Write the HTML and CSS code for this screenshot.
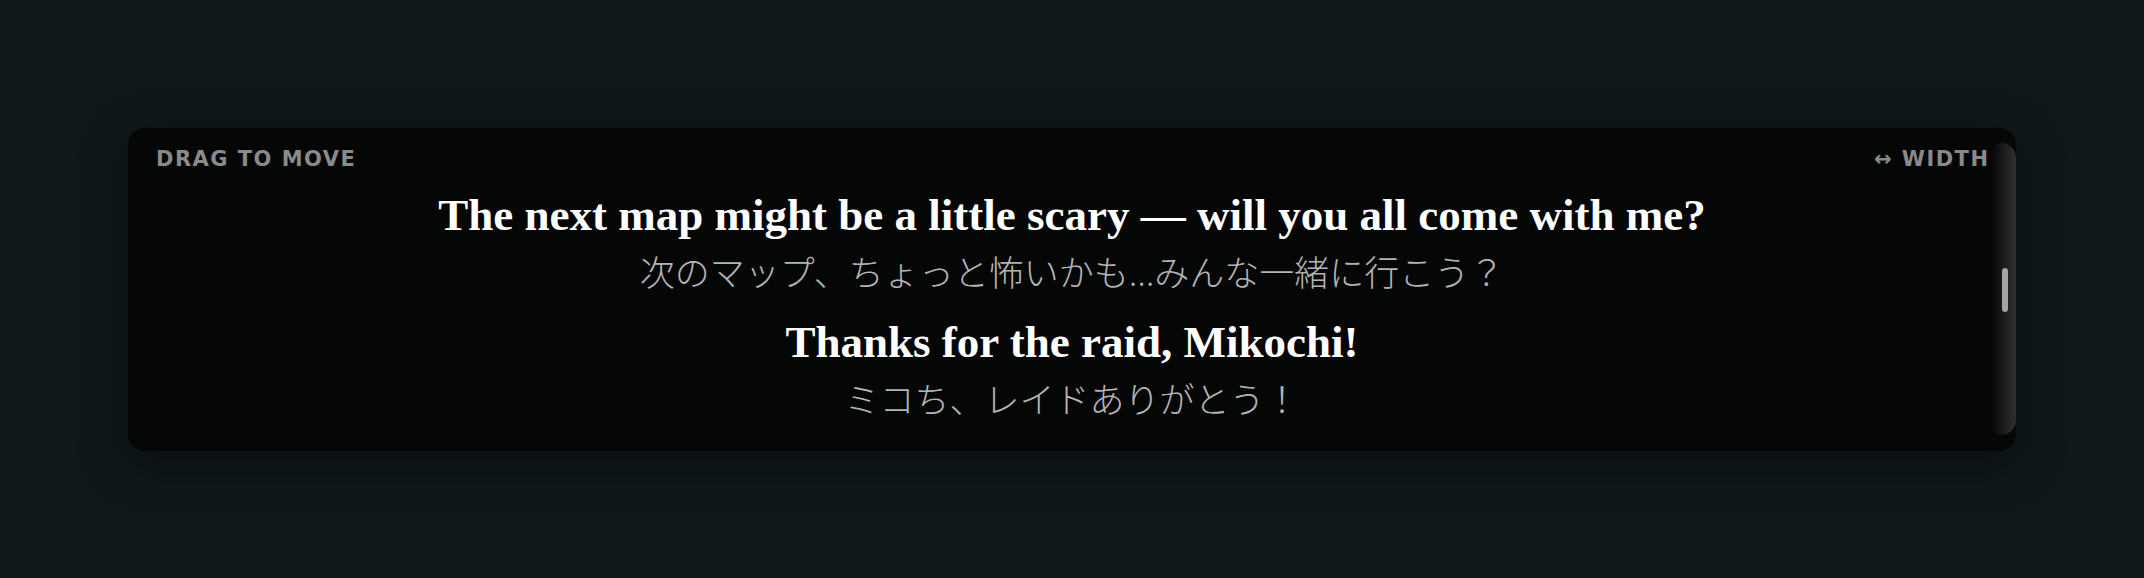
FILE: index.html
```html
<!DOCTYPE html>
<html lang="en">
<head>
<meta charset="utf-8">
<title>Subtitles overlay</title>
<link rel="stylesheet" href="styles.css">
</head>
<body>
<div class="overlay">
  <div class="bar">
    <span class="label">Drag to move</span>
    <span class="label">↔ Width</span>
  </div>
  <div class="lines">
    <div class="pair">
      <div class="en">The next map might be a little scary — will you all come with me?</div>
      <div class="ja" lang="ja">次のマップ、ちょっと怖いかも…みんな一緒に行こう？</div>
    </div>
    <div class="pair">
      <div class="en">Thanks for the raid, Mikochi!</div>
      <div class="ja" lang="ja">ミコち、レイドありがとう！</div>
    </div>
  </div>
  <div class="track"><div class="thumb"></div></div>
</div>
</body>
</html>
```
FILE: styles.css
```css
html, body {
  margin: 0;
  height: 100%;
}
body {
  background: #10181b;
  padding: 128px;
  box-sizing: border-box;
}
.overlay {
  position: relative;
  background: #050606;
  border-radius: 16px;
  box-shadow: 0 12px 48px rgba(0, 0, 0, 0.45);
  padding: 19px 28px 27px;
}
.bar {
  display: flex;
  justify-content: space-between;
}
.label {
  font-family: "DejaVu Sans", sans-serif;
  font-weight: bold;
  font-size: 21px;
  line-height: 24px;
  letter-spacing: 0.07em;
  text-transform: uppercase;
  color: #8a8a8a;
}
.label:last-child {
  margin-right: -0.07em;
}
.lines {
  display: flex;
  flex-direction: column;
  gap: 18px;
  margin-top: 17px;
  text-align: center;
}
.en {
  font-family: "Liberation Serif", "Times New Roman", serif;
  font-weight: bold;
  font-size: 45px;
  line-height: 1.2;
  color: #ffffff;
  margin-bottom: 6px;
}
.ja {
  font-family: "Noto Sans", "Noto Sans CJK JP", sans-serif;
  font-weight: 300;
  font-size: 35px;
  line-height: 1.4;
  color: #b4b4b4;
}
.track {
  position: absolute;
  top: 15px;
  bottom: 16px;
  right: 0;
  width: 24px;
  border-radius: 10px 16px 16px 10px;
  background: linear-gradient(to right, rgba(255,255,255,0) 0%, rgba(255,255,255,0.07) 40%, rgba(255,255,255,0.17) 100%);
}
.thumb {
  position: absolute;
  left: 10px;
  top: 125px;
  width: 6px;
  height: 44px;
  border-radius: 3px;
  background: #a3a3a3;
}
```
